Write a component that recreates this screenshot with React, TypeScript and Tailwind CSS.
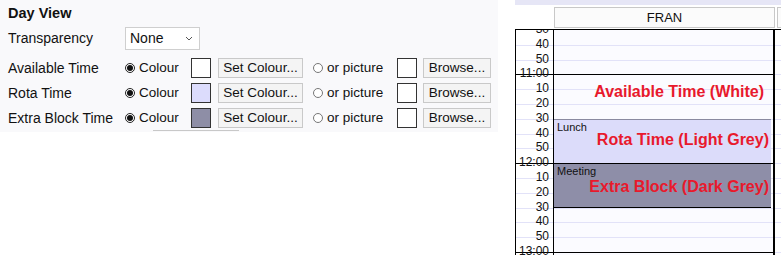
import React from "react";

const labels = ["30","40","50","11:00","10","20","30","40","50","12:00","10","20","30","40","50","13:00","10"];

function Radio({ checked }: { checked: boolean }) {
  return (
    <span className={`inline-flex w-[10px] h-[10px] rounded-full border items-center justify-center bg-white ${checked ? "border-[#222]" : "border-[#777]"}`}>
      {checked && <span className="w-[6px] h-[6px] rounded-full bg-[#111]" />}
    </span>
  );
}

function Btn({ children, w }: { children: React.ReactNode; w: string }) {
  return (
    <div className={`${w} h-[20px] border border-[#c9c9c9] bg-[#f4f4f4] flex items-center justify-center text-[13.5px] text-[#111] leading-none`}>
      {children}
    </div>
  );
}

function Row({ label, swatch }: { label: string; swatch: string }) {
  return (
    <div className="flex items-center h-[20px] text-[13.5px] text-[#111]">
      <div className="w-[117px] text-[14px]">{label}</div>
      <div className="flex items-center w-[66px]">
        <Radio checked />
        <span className="ml-[4px]">Colour</span>
      </div>
      <div className={`w-[20px] h-[20px] border border-[#333] ${swatch}`} />
      <div className="ml-[7px]"><Btn w="w-[85px]">Set Colour...</Btn></div>
      <div className="flex items-center ml-[10px] w-[84px]">
        <Radio checked={false} />
        <span className="ml-[4px]">or picture</span>
      </div>
      <div className="w-[20px] h-[20px] border border-[#333] bg-white" />
      <div className="ml-[6px]"><Btn w="w-[68px]">Browse...</Btn></div>
    </div>
  );
}

export default function App() {
  return (
    <div className="w-[781px] h-[255px] bg-white flex overflow-hidden font-['Liberation_Sans',Arial,sans-serif]">
      {/* Left settings panel */}
      <div className="w-[498px] h-[132px] bg-[#f9f9fb] flex flex-col pl-[8px] shrink-0">
        <div className="h-[26px] flex items-center pt-[2px] text-[14.5px] font-bold text-[#111]">Day View</div>
        <div className="h-[24px] flex items-center text-[14px] text-[#111]">
          <div className="w-[117px]">Transparency</div>
          <div className="w-[75px] h-[23px] border border-[#cfcfcf] bg-white flex items-center justify-between pl-[4px] pr-[6px]">
            <span>None</span>
            <svg width="8" height="5" viewBox="0 0 8 5" fill="none">
              <path d="M1 1 L4 4 L7 1" stroke="#555" strokeWidth="1" />
            </svg>
          </div>
        </div>
        <div className="mt-[8px] flex flex-col gap-[5px]">
          <Row label="Available Time" swatch="bg-white" />
          <Row label="Rota Time" swatch="bg-[#dcdcfc]" />
          <Row label="Extra Block Time" swatch="bg-[#8e8ea6]" />
        </div>
        <div className="mt-[2px] ml-[145px] w-[86px] h-[1px] bg-[#c8c8c8]" />
      </div>

      {/* Right calendar panel */}
      <div className="ml-[17px] flex-1 flex flex-col">
        <div className="h-[5px] bg-[#e6e6f6]" />
        <div className="h-[24px] flex">
          <div className="w-[39px]" />
          <div className="mt-[2px] h-[21px] w-[221px] border border-[#c8c8c8] bg-[#fbfbfb] flex items-center justify-center text-[13px] text-[#111]">FRAN</div>
          <div className="mt-[2px] ml-[2px] h-[21px] flex-1 border-l border-y border-[#c8c8c8] bg-[#fbfbfb]" />
        </div>
        <div className="flex-1 border-t border-black flex overflow-hidden">
          <div className="w-[38px] border-l border-black flex flex-col bg-white">
            {labels.map((l, i) => (
              <div
                key={i}
                className={`h-[14.8px] shrink-0 border-t ${i === 0 ? "border-transparent" : l.includes(":") ? "border-black" : "border-[#e2e2f8]"} text-right pr-[4px] text-[12px] text-[#111] leading-[12px]`}
              >
                <div className="-mt-[8px] relative">{l}</div>
              </div>
            ))}
          </div>
          <div className="w-[222px] border-l border-r-2 border-black relative flex flex-col bg-[#fbfbff]">
            {labels.map((l, i) => (
              <div
                key={i}
                className={`h-[14.8px] shrink-0 border-t ${i === 0 ? "border-transparent" : l.includes(":") ? "border-black" : "border-[#e2e2f8]"}`}
              />
            ))}
            <div className="absolute left-0 right-[2px] top-[88.8px] h-[44.4px] bg-[#dcdcfa] border-t border-[#8a8aa0] pl-[3px] pt-[1px] text-[11px] leading-[13px] text-[#111]">Lunch</div>
            <div className="absolute left-0 right-[2px] top-[133.2px] h-[45px] bg-[#8e8ea8] border-y border-black pl-[3px] pt-[1px] text-[11px] leading-[13px] text-[#111]">Meeting</div>
            <div className="absolute right-[9px] top-[54px] text-[16px] font-bold text-[#e8192c] leading-none">Available Time (White)</div>
            <div className="absolute right-[4px] top-[102px] text-[16px] font-bold text-[#e8192c] leading-none">Rota Time (Light Grey)</div>
            <div className="absolute right-[4px] top-[149px] text-[16px] font-bold text-[#e8192c] leading-none">Extra Block (Dark Grey)</div>
          </div>
          <div className="flex-1 flex flex-col">
            {labels.map((l, i) => (
              <div key={i} className={`h-[14.8px] shrink-0 border-t ${i === 0 ? "border-transparent" : "border-[#e2e2f8]"}`} />
            ))}
          </div>
        </div>
      </div>
    </div>
  );
}
